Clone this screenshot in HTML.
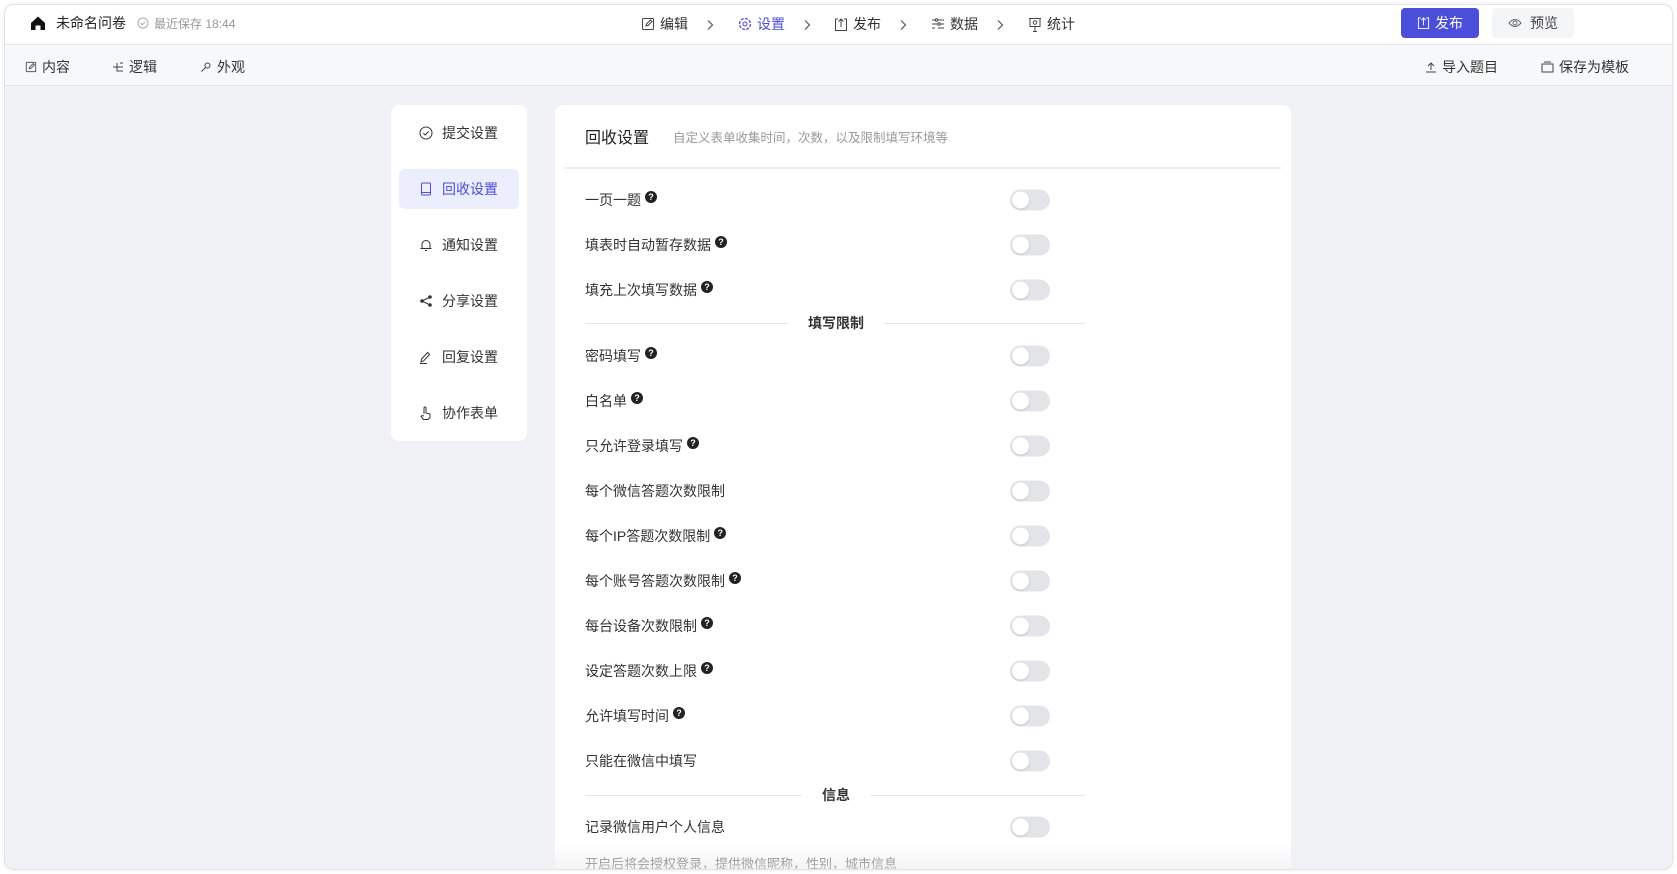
<!DOCTYPE html>
<html><head><meta charset="utf-8"><style>
*{box-sizing:border-box;margin:0;padding:0}
body{width:1677px;height:874px;background:#fff;font-family:"Liberation Sans","Noto Sans CJK SC",sans-serif;color:#333;overflow:hidden;position:relative}
.frame{position:absolute;left:4px;top:4px;width:1669px;height:866px;border:1px solid #e2e3e6;border-radius:10px;overflow:hidden;background:#f1f2f5;box-shadow:0 0 4px rgba(0,0,0,.08)}
.hdr{position:absolute;left:0;top:0;right:0;height:40px;background:#fff;border-bottom:1px solid #e4e5e8}
.tb{position:absolute;left:0;top:40px;right:0;height:41px;background:#f7f8fa;border-bottom:1px solid #e4e5e8}
.a{position:absolute;white-space:nowrap;font-size:14px;display:flex;align-items:center;gap:5px}
.chev{position:absolute;top:14px}
svg{display:block}
.card{position:absolute;background:#fff;border-radius:8px}
.nav{position:absolute;left:0;width:136px;height:40px;display:flex;align-items:center;padding-left:28px;gap:9px;font-size:14px;color:#333}
.row{position:absolute;left:30px;font-size:14px;color:#333;display:flex;align-items:center;gap:4px;transform:translateY(-50%)}
.q{width:12px;height:12px;border-radius:50%;background:#222;color:#fff;font-size:9px;font-weight:bold;display:inline-flex;align-items:center;justify-content:center;margin-top:-6px}
.tg{position:absolute;left:455px;width:40px;height:21px;border-radius:11px;background:#e3e4e8;transform:translateY(-50%)}
.tg:after{content:"";position:absolute;left:2px;top:2px;width:17px;height:17px;border-radius:50%;background:#fff;box-shadow:0 1px 2px rgba(0,0,0,.15)}
.sec{position:absolute;left:30px;width:500px;height:1px;background:#e6e7ea}
.sect{position:absolute;font-size:14px;font-weight:bold;color:#333;background:#fff;padding:0 20px;transform:translate(-50%,-50%)}
</style></head><body>
<div class="frame">
 <div class="hdr">
  <div class="a" style="left:24px;top:8px"><svg width="18" height="18" viewBox="0 0 18 18"><path d="M2 9L9 2.5 16 9V16H11.5V11.5H6.5V16H2Z" fill="#111"/></svg><span style="margin-left:4px;font-size:14px;color:#222">未命名问卷</span>
   <svg width="12" height="12" viewBox="0 0 12 12" style="margin-left:6px"><circle cx="6" cy="6" r="5" fill="none" stroke="#aaa"/><path d="M3.6 6.2l1.7 1.6 3-3" fill="none" stroke="#aaa"/></svg><span style="font-size:12px;color:#999">最近保存 18:44</span></div>
  <div class="a" style="left:636px;top:9px;color:#333"><svg width="14" height="14" viewBox="0 0 14 14"><rect x="1.5" y="1.5" width="11" height="11" rx="1" fill="none" stroke="#444"/><path d="M5 9l.5-2 4-4 1.5 1.5-4 4z" fill="none" stroke="#444"/></svg>编辑</div>
  <svg class="chev" style="left:701px" width="8" height="12" viewBox="0 0 8 12"><path d="M2 1.5l4.5 4.5L2 10.5" fill="none" stroke="#555" stroke-width="1.2"/></svg>
  <div class="a" style="left:733px;top:9px;color:#4b4ed8"><svg width="14" height="14" viewBox="0 0 14 14"><circle cx="7" cy="7" r="5.5" fill="none" stroke="#4b4ed8" stroke-width="1.3" stroke-dasharray="3 1.3"/><circle cx="7" cy="7" r="2" fill="none" stroke="#4b4ed8"/></svg>设置</div>
  <svg class="chev" style="left:798px" width="8" height="12" viewBox="0 0 8 12"><path d="M2 1.5l4.5 4.5L2 10.5" fill="none" stroke="#555" stroke-width="1.2"/></svg>
  <div class="a" style="left:829px;top:9px"><svg width="14" height="15" viewBox="0 0 14 15"><path d="M4 2H1.5v11.5h11V2H10M7 10V2M4.5 4.5L7 2l2.5 2.5" fill="none" stroke="#444"/></svg>发布</div>
  <svg class="chev" style="left:894px" width="8" height="12" viewBox="0 0 8 12"><path d="M2 1.5l4.5 4.5L2 10.5" fill="none" stroke="#555" stroke-width="1.2"/></svg>
  <div class="a" style="left:926px;top:9px"><svg width="14" height="14" viewBox="0 0 14 14"><path d="M1 3h3M7 3h6M1 7h6M9 7h4M1 11h3M7 11h6" stroke="#444"/><circle cx="5.5" cy="3" r="1.3" fill="none" stroke="#444"/><circle cx="8" cy="7" r="1.3" fill="none" stroke="#444"/></svg>数据</div>
  <svg class="chev" style="left:991px" width="8" height="12" viewBox="0 0 8 12"><path d="M2 1.5l4.5 4.5L2 10.5" fill="none" stroke="#555" stroke-width="1.2"/></svg>
  <div class="a" style="left:1023px;top:9px"><svg width="14" height="15" viewBox="0 0 14 15"><path d="M1 1.5h12M2 1.5v8h10v-8M7 9.5v5M5 14.5h4" fill="none" stroke="#444"/><circle cx="7" cy="5.5" r="1.8" fill="none" stroke="#444"/></svg>统计</div>
  <div style="position:absolute;left:1396px;top:3px;width:78px;height:30px;background:#4b4ed8;border-radius:4px;color:#fff;font-size:14px;display:flex;align-items:center;justify-content:center;gap:5px"><svg width="13" height="14" viewBox="0 0 14 15"><path d="M4 2H1.5v11.5h11V2H10M7 10V2M4.5 4.5L7 2l2.5 2.5" fill="none" stroke="#fff"/></svg>发布</div>
  <div style="position:absolute;left:1487px;top:3px;width:82px;height:30px;background:#f4f5f7;border-radius:4px;color:#444;font-size:14px;display:flex;align-items:center;justify-content:center;gap:8px"><svg width="14" height="12" viewBox="0 0 14 12"><path d="M1 6Q7-1 13 6Q7 13 1 6Z" fill="none" stroke="#666"/><circle cx="7" cy="6" r="2" fill="none" stroke="#666"/></svg>预览</div>
 </div>
 <div class="tb">
  <div class="a" style="left:20px;top:12px"><svg width="12" height="12" viewBox="0 0 14 14"><rect x="1.5" y="1.5" width="11" height="11" rx="1" fill="none" stroke="#444"/><path d="M5 9l.5-2 4-4 1.5 1.5-4 4z" fill="none" stroke="#444"/></svg>内容</div>
  <div class="a" style="left:107px;top:12px"><svg width="12" height="12" viewBox="0 0 12 12"><path d="M1 6h4M8 2h3M5 2v8h6M5 6h6" fill="none" stroke="#444"/></svg>逻辑</div>
  <div class="a" style="left:195px;top:12px"><svg width="12" height="12" viewBox="0 0 12 12"><circle cx="7.5" cy="4.5" r="2.5" fill="none" stroke="#444"/><path d="M5.5 6.5L1.5 10.5" stroke="#444"/></svg>外观</div>
  <div class="a" style="left:1420px;top:12px"><svg width="12" height="12" viewBox="0 0 12 12"><path d="M6 9V2M3 5l3-3 3 3M1 11h10" fill="none" stroke="#444"/></svg>导入题目</div>
  <div class="a" style="left:1536px;top:12px"><svg width="13" height="12" viewBox="0 0 13 12"><rect x="1" y="3" width="11" height="8" fill="none" stroke="#444"/><path d="M3 1h7" stroke="#444"/></svg>保存为模板</div>
 </div>
 <div class="card" style="left:386px;top:100px;width:136px;height:336px">
  <div class="nav" style="top:8px"><svg width="14" height="14" viewBox="0 0 14 14"><circle cx="7" cy="7" r="6" fill="none" stroke="#333"/><path d="M4.3 7.2l1.9 1.8 3.5-3.6" fill="none" stroke="#333"/></svg>提交设置</div>
  <div style="position:absolute;left:8px;top:64px;width:120px;height:40px;background:#eceefd;border-radius:6px"></div>
  <div class="nav" style="top:64px;color:#4b4ed8"><svg width="14" height="14" viewBox="0 0 14 14"><rect x="2.5" y="1" width="9" height="12" rx="1" fill="none" stroke="#4b4ed8"/><path d="M2.5 10.5h9" stroke="#4b4ed8"/></svg>回收设置</div>
  <div class="nav" style="top:120px"><svg width="14" height="14" viewBox="0 0 14 14"><path d="M3 10.5V6.5a4 4 0 018 0v4M1.5 10.5h11M6 12.5h2" fill="none" stroke="#333"/></svg>通知设置</div>
  <div class="nav" style="top:176px"><svg width="14" height="14" viewBox="0 0 14 14"><circle cx="3" cy="7" r="1.8" fill="#333"/><circle cx="11" cy="3" r="1.8" fill="#333"/><circle cx="11" cy="11" r="1.8" fill="#333"/><path d="M3 7l8-4M3 7l8 4" stroke="#333"/></svg>分享设置</div>
  <div class="nav" style="top:232px"><svg width="14" height="14" viewBox="0 0 14 14"><path d="M2 12l.6-3 6-6.5 2 2L4.5 11zM1 13.5h7" fill="none" stroke="#333"/></svg>回复设置</div>
  <div class="nav" style="top:288px"><svg width="14" height="14" viewBox="0 0 14 14"><path d="M5 8V2a1 1 0 012 0v5l4 1v3.5l-2 2H4.5L2 10.5l1-1L5 10" fill="none" stroke="#333"/></svg>协作表单</div>
 </div>
 <div class="card" style="left:550px;top:100px;width:736px;height:780px">
  <div style="position:absolute;left:30px;top:19px;font-size:16px;color:#222">回收设置</div>
  <div style="position:absolute;left:118px;top:22px;font-size:12.5px;color:#999">自定义表单收集时间，次数，以及限制填写环境等</div>
  <div style="position:absolute;left:10px;top:62px;width:716px;height:2px;background:#ebecef"></div>
  <div class="row" style="top:95px">一页一题<span class="q">?</span></div><div class="tg" style="top:95px"></div>
  <div class="row" style="top:140px">填表时自动暂存数据<span class="q">?</span></div><div class="tg" style="top:140px"></div>
  <div class="row" style="top:185px">填充上次填写数据<span class="q">?</span></div><div class="tg" style="top:185px"></div>
  <div class="sec" style="top:218px"></div><div class="sect" style="left:281px;top:218px">填写限制</div>
  <div class="row" style="top:251px">密码填写<span class="q">?</span></div><div class="tg" style="top:251px"></div>
  <div class="row" style="top:296px">白名单<span class="q">?</span></div><div class="tg" style="top:296px"></div>
  <div class="row" style="top:341px">只允许登录填写<span class="q">?</span></div><div class="tg" style="top:341px"></div>
  <div class="row" style="top:386px">每个微信答题次数限制</div><div class="tg" style="top:386px"></div>
  <div class="row" style="top:431px">每个IP答题次数限制<span class="q">?</span></div><div class="tg" style="top:431px"></div>
  <div class="row" style="top:476px">每个账号答题次数限制<span class="q">?</span></div><div class="tg" style="top:476px"></div>
  <div class="row" style="top:521px">每台设备次数限制<span class="q">?</span></div><div class="tg" style="top:521px"></div>
  <div class="row" style="top:566px">设定答题次数上限<span class="q">?</span></div><div class="tg" style="top:566px"></div>
  <div class="row" style="top:611px">允许填写时间<span class="q">?</span></div><div class="tg" style="top:611px"></div>
  <div class="row" style="top:656px">只能在微信中填写</div><div class="tg" style="top:656px"></div>
  <div class="sec" style="top:690px"></div><div class="sect" style="left:281px;top:690px">信息</div>
  <div class="row" style="top:722px">记录微信用户个人信息</div><div class="tg" style="top:722px"></div>
  <div class="row" style="top:758px;color:#666;font-size:13px">开启后将会授权登录，提供微信昵称，性别，城市信息</div>
  <div style="position:absolute;left:0;top:738px;width:736px;height:40px;background:linear-gradient(rgba(255,255,255,0),rgba(236,237,240,.9))"></div>
 </div>
</div>
</body></html>
